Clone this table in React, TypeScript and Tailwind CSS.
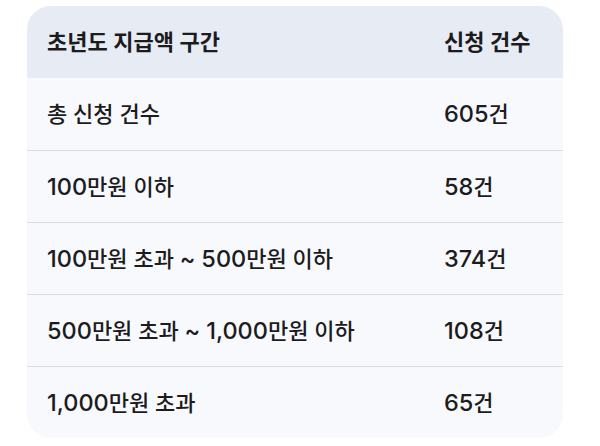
const ROWS = [
  { label: '총 신청 건수', count: '605건' },
  { label: '100만원 이하', count: '58건' },
  { label: '100만원 초과 ~ 500만원 이하', count: '374건' },
  { label: '500만원 초과 ~ 1,000만원 이하', count: '108건' },
  { label: '1,000만원 초과', count: '65건' },
]

// Latin digits render a touch larger than the Hangul around them
function Mixed({ text }: { text: string }) {
  return (
    <>
      {text.split(/([0-9,~]+)/).map((part, i) =>
        /[0-9,~]/.test(part) ? (
          <span key={i} className="text-[23.5px]">{part}</span>
        ) : (
          <span key={i}>{part}</span>
        )
      )}
    </>
  )
}

export default function App() {
  return (
    <div
      className="w-[600px] h-[446px] bg-white pt-[6px] pl-[27px]"
      style={{ fontFamily: 'Inter, "Noto Sans CJK KR", sans-serif' }}
    >
      <div className="w-[536px] rounded-[24px] overflow-hidden bg-[#f8f9fd] text-[#1c1c1e]">
        {/* Header */}
        <div className="grid grid-cols-[397px_139px] h-[72px] items-center bg-[#e7ebf3] text-[22px] font-semibold">
          <div className="pl-5">초년도 지급액 구간</div>
          <div className="pl-5">신청 건수</div>
        </div>

        {ROWS.map((r, i) => (
          <div
            key={r.label}
            className={`grid grid-cols-[397px_139px] h-[72px] items-center text-[22px] font-medium leading-none ${
              i > 0 ? 'border-t border-[#d9dce3]' : ''
            }`}
          >
            <div className="pl-5"><Mixed text={r.label} /></div>
            <div className="pl-5"><Mixed text={r.count} /></div>
          </div>
        ))}
      </div>
    </div>
  )
}
